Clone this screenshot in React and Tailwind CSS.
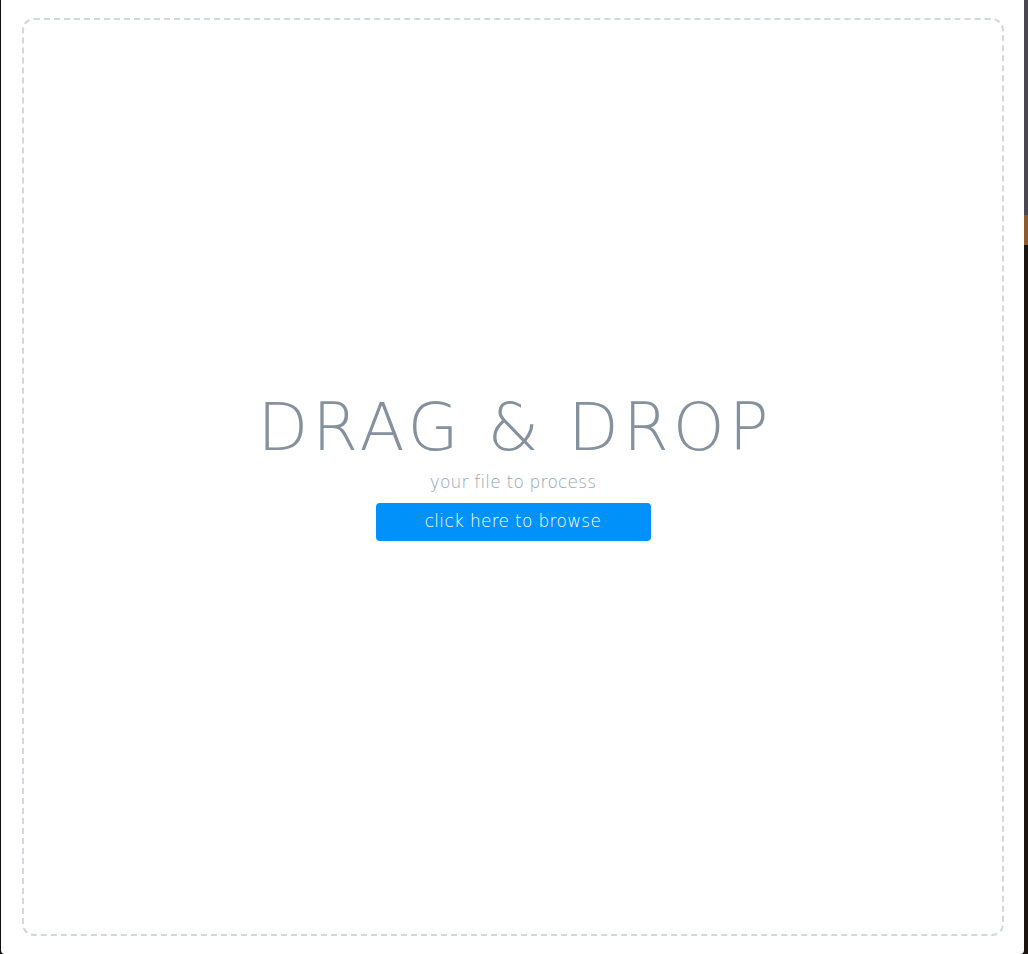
export default function App() {
  return (
    <div className="flex h-[954px] w-full bg-[#111] font-['DejaVu_Sans',sans-serif]">
      <div className="ml-[1px] flex flex-1 rounded-b-[4px] bg-white pt-[18px] pr-[20px] pb-[18px] pl-[21px]">
        <div className="flex flex-1 flex-col items-center justify-center rounded-[12px] border-2 border-dashed border-[#d3d8de] pb-[18px]">
          <h1 className="pl-[4px] text-[66px] font-light leading-none tracking-[4px] text-[#85919d]">
            DRAG &amp; DROP
          </h1>
          <p className="mt-[9px] text-[17px] font-light tracking-[0.2px] text-[#97a2ae]">your file to process</p>
          <button
            type="button"
            className="mt-[7px] h-[38px] w-[275px] rounded-[4px] bg-[#0091fa] text-[17px] font-light tracking-[0.3px] text-white"
          >
            click here to browse
          </button>
        </div>
      </div>
      <div className="w-[4px] bg-[linear-gradient(to_bottom,#4b4751_0px,#4b4751_215px,#8a5a30_215px,#8a5a30_245px,#1c1410_245px)]" />
    </div>
  );
}
